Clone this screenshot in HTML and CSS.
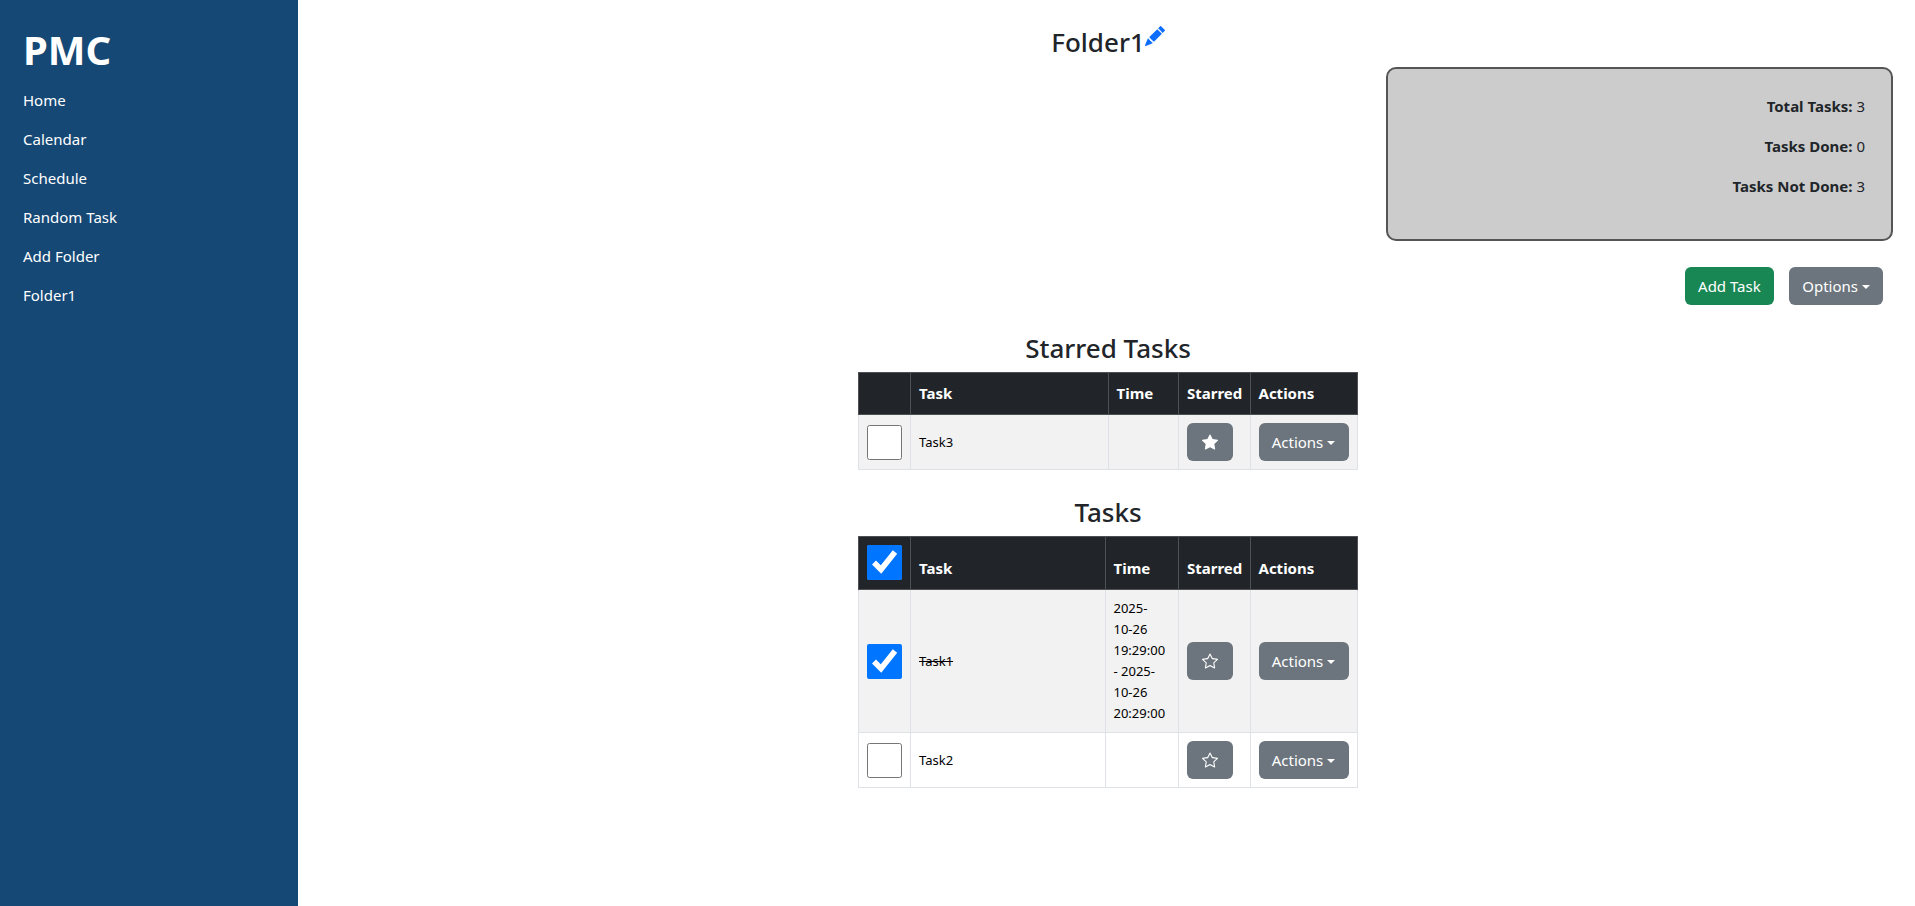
FILE: index.html
```html
<!DOCTYPE html>
<html lang="en">
<head>
    <meta charset="UTF-8">
    <meta name="viewport" content="width=device-width, initial-scale=1.0">
    <title>PMC - Folder1</title>
    <link rel="stylesheet" href="styles.css">
</head>
<body>

<nav class="sidebar">
    <h1>PMC</h1>
    <a href="#">Home</a>
    <a href="#">Calendar</a>
    <a href="#">Schedule</a>
    <a href="#">Random Task</a>
    <a href="#">Add Folder</a>
    <a href="#">Folder1</a>
</nav>

<main class="content">

    <h2 class="folder-title">Folder1<a href="#" class="edit-link"><svg viewBox="0 0 16 16" width="20" height="20" fill="currentColor"><path d="M12.854.146a.5.5 0 0 0-.707 0L10.5 1.793 14.207 5.5l1.647-1.646a.5.5 0 0 0 0-.708l-3-3zm.646 6.061L9.793 2.5 3.293 9H3.5a.5.5 0 0 1 .5.5v.5h.5a.5.5 0 0 1 .5.5v.5h.5a.5.5 0 0 1 .5.5v.5h.5a.5.5 0 0 1 .5.5v.207l6.5-6.5zm-7.468 7.468A.5.5 0 0 1 6 13.5V13h-.5a.5.5 0 0 1-.5-.5V12h-.5a.5.5 0 0 1-.5-.5V11h-.5a.5.5 0 0 1-.5-.5V10h-.5a.499.499 0 0 1-.175-.032l-.179.178a.5.5 0 0 0-.11.168l-2 5a.5.5 0 0 0 .65.65l5-2a.5.5 0 0 0 .168-.11l.178-.178z"/></svg></a></h2>

    <!-- Stats -->
    <section class="stats">
        <p><strong>Total Tasks:</strong> 3</p>
        <p><strong>Tasks Done:</strong> 0</p>
        <p><strong>Tasks Not Done:</strong> 3</p>
    </section>

    <div class="page-actions">
        <button class="btn btn-green">Add Task</button>
        <button class="btn btn-gray caret">Options</button>
    </div>

    <!-- Starred tasks -->
    <section class="task-section">
        <h3>Starred Tasks</h3>
        <table class="task-table starred-table">
            <colgroup>
                <col class="col-check"><col class="col-task"><col class="col-time"><col class="col-star"><col class="col-actions">
            </colgroup>
            <thead>
                <tr>
                    <th></th>
                    <th>Task</th>
                    <th>Time</th>
                    <th>Starred</th>
                    <th>Actions</th>
                </tr>
            </thead>
            <tbody>
                <tr class="row-shaded">
                    <td><input type="checkbox" class="task-check"></td>
                    <td>Task3</td>
                    <td></td>
                    <td><button class="btn btn-gray btn-star"><svg viewBox="0 0 16 16" width="16" height="16" fill="currentColor"><path d="M3.612 15.443c-.386.198-.824-.149-.746-.592l.83-4.73L.173 6.765c-.329-.314-.158-.888.283-.95l4.898-.696L7.538.792c.197-.39.73-.39.927 0l2.184 4.327 4.898.696c.441.062.612.636.282.95l-3.522 3.356.83 4.73c.078.443-.36.79-.746.592L8 13.187l-4.389 2.256z"/></svg></button></td>
                    <td><button class="btn btn-gray caret">Actions</button></td>
                </tr>
            </tbody>
        </table>
    </section>

    <!-- All tasks -->
    <section class="task-section">
        <h3>Tasks</h3>
        <table class="task-table all-table">
            <colgroup>
                <col class="col-check"><col class="col-task"><col class="col-time"><col class="col-star"><col class="col-actions">
            </colgroup>
            <thead>
                <tr>
                    <th><input type="checkbox" class="task-check" checked></th>
                    <th>Task</th>
                    <th>Time</th>
                    <th>Starred</th>
                    <th>Actions</th>
                </tr>
            </thead>
            <tbody>
                <tr class="row-shaded">
                    <td><input type="checkbox" class="task-check" checked></td>
                    <td><s>Task1</s></td>
                    <td>2025-<br>10-26 19:29:00 - 2025-10-26 20:29:00</td>
                    <td><button class="btn btn-gray btn-star"><svg viewBox="0 0 16 16" width="16" height="16" fill="currentColor"><path d="M2.866 14.85c-.078.444.36.791.746.593l4.39-2.256 4.389 2.256c.386.198.824-.149.746-.592l-.83-4.73 3.522-3.356c.33-.314.16-.888-.282-.95l-4.898-.696L8.465.792a.513.513 0 0 0-.927 0L5.354 5.12l-4.898.696c-.441.062-.612.636-.283.95l3.523 3.356-.83 4.73zm4.905-2.767-3.686 1.894.694-3.957a.565.565 0 0 0-.163-.505L1.71 6.745l4.052-.576a.525.525 0 0 0 .393-.288L8 2.223l1.847 3.658a.525.525 0 0 0 .393.288l4.052.575-2.906 2.77a.565.565 0 0 0-.163.506l.694 3.957-3.686-1.894a.503.503 0 0 0-.461 0z"/></svg></button></td>
                    <td><button class="btn btn-gray caret">Actions</button></td>
                </tr>
                <tr>
                    <td><input type="checkbox" class="task-check"></td>
                    <td>Task2</td>
                    <td></td>
                    <td><button class="btn btn-gray btn-star"><svg viewBox="0 0 16 16" width="16" height="16" fill="currentColor"><path d="M2.866 14.85c-.078.444.36.791.746.593l4.39-2.256 4.389 2.256c.386.198.824-.149.746-.592l-.83-4.73 3.522-3.356c.33-.314.16-.888-.282-.95l-4.898-.696L8.465.792a.513.513 0 0 0-.927 0L5.354 5.12l-4.898.696c-.441.062-.612.636-.283.95l3.523 3.356-.83 4.73zm4.905-2.767-3.686 1.894.694-3.957a.565.565 0 0 0-.163-.505L1.71 6.745l4.052-.576a.525.525 0 0 0 .393-.288L8 2.223l1.847 3.658a.525.525 0 0 0 .393.288l4.052.575-2.906 2.77a.565.565 0 0 0-.163.506l.694 3.957-3.686-1.894a.503.503 0 0 0-.461 0z"/></svg></button></td>
                    <td><button class="btn btn-gray caret">Actions</button></td>
                </tr>
            </tbody>
        </table>
    </section>

</main>

</body>
</html>
```
FILE: styles.css
```css
/* Page */
* {
    box-sizing: border-box;
}
html, body {
    height: 100%;
}
body {
    display: flex;
    margin: 0;
    font-family: "Noto Sans", "Open Sans", sans-serif;
    font-size: 15px;
    line-height: 24px;
    color: #212529;
    background-color: #fff;
}

/* Sidebar */
.sidebar {
    flex: 0 0 298px;
    display: flex;
    flex-direction: column;
    padding: 20px 23px;
    background-color: #154875;
}
.sidebar h1 {
    margin: 0 0 1px;
    font-size: 40px;
    line-height: 60px;
    font-weight: 700;
    color: #fff;
}
.sidebar a {
    height: 39px;
    line-height: 39px;
    font-size: 15px;
    color: #fff;
    text-decoration: none;
}

/* Main area */
.content {
    flex: 1;
    padding: 26px 22px 0 25px;
}
.folder-title {
    margin: 0 0 9px;
    font-size: 26px;
    line-height: 32px;
    font-weight: 500;
    text-align: center;
}
.edit-link {
    color: #0d6efd;
}
.edit-link svg {
    vertical-align: 6px;
}

/* Stats box */
.stats {
    width: 507px;
    height: 174px;
    margin-left: auto;
    padding: 25px 26px 0 0;
    background-color: #ccc;
    border: 2px solid #555;
    border-radius: 10px;
    text-align: right;
}
.stats p {
    margin: 0 0 16px;
}

/* Buttons */
.btn {
    display: inline-block;
    height: 38px;
    padding: 0 12px;
    border: 1px solid transparent;
    border-radius: 6px;
    font-family: inherit;
    font-size: 15px;
    color: #fff;
    cursor: pointer;
}
.btn-green {
    padding: 0 12.5px;
    background-color: #198754;
}
.btn-gray {
    background-color: #6c757d;
}
.btn-star {
    display: flex;
    align-items: center;
    justify-content: center;
    width: 46px;
    padding: 0;
}
.caret::after {
    content: "";
    display: inline-block;
    margin-left: 4px;
    vertical-align: 3px;
    border-top: 4px solid;
    border-right: 4px solid transparent;
    border-left: 4px solid transparent;
}
.page-actions {
    display: flex;
    justify-content: flex-end;
    gap: 15px;
    margin: 26px 10px 26px 0;
}

/* Task tables */
.task-section {
    width: 500px;
    margin: 0 auto 25px;
}
.task-section h3 {
    margin: 0 0 7px;
    font-size: 26px;
    line-height: 34px;
    font-weight: 500;
    text-align: center;
}
.task-table {
    width: 100%;
    table-layout: fixed;
    border-collapse: collapse;
    font-size: 13px;
    line-height: 21px;
    color: #000;
}
.task-table th, .task-table td {
    padding: 8px;
    border: 1px solid #dee2e6;
}
.task-table th {
    padding: 8px 8px 9px;
    font-size: 15px;
    line-height: 24px;
    font-weight: 700;
    text-align: left;
    vertical-align: bottom;
    color: #fff;
    background-color: #212529;
    border-color: #4d5154;
}
.task-table td {
    vertical-align: middle;
}
.task-table .caret {
    width: 90px;
}
.row-shaded td {
    background-color: #f2f2f2;
}
.task-check {
    display: block;
    width: 35px;
    height: 35px;
    margin: 0;
}
.col-check {
    width: 52px;
}
.col-star {
    width: 71.5px;
}
.col-actions {
    width: 107.5px;
}
.starred-table .col-time {
    width: 70.5px;
}
.all-table .col-time {
    width: 73.5px;
}
```
